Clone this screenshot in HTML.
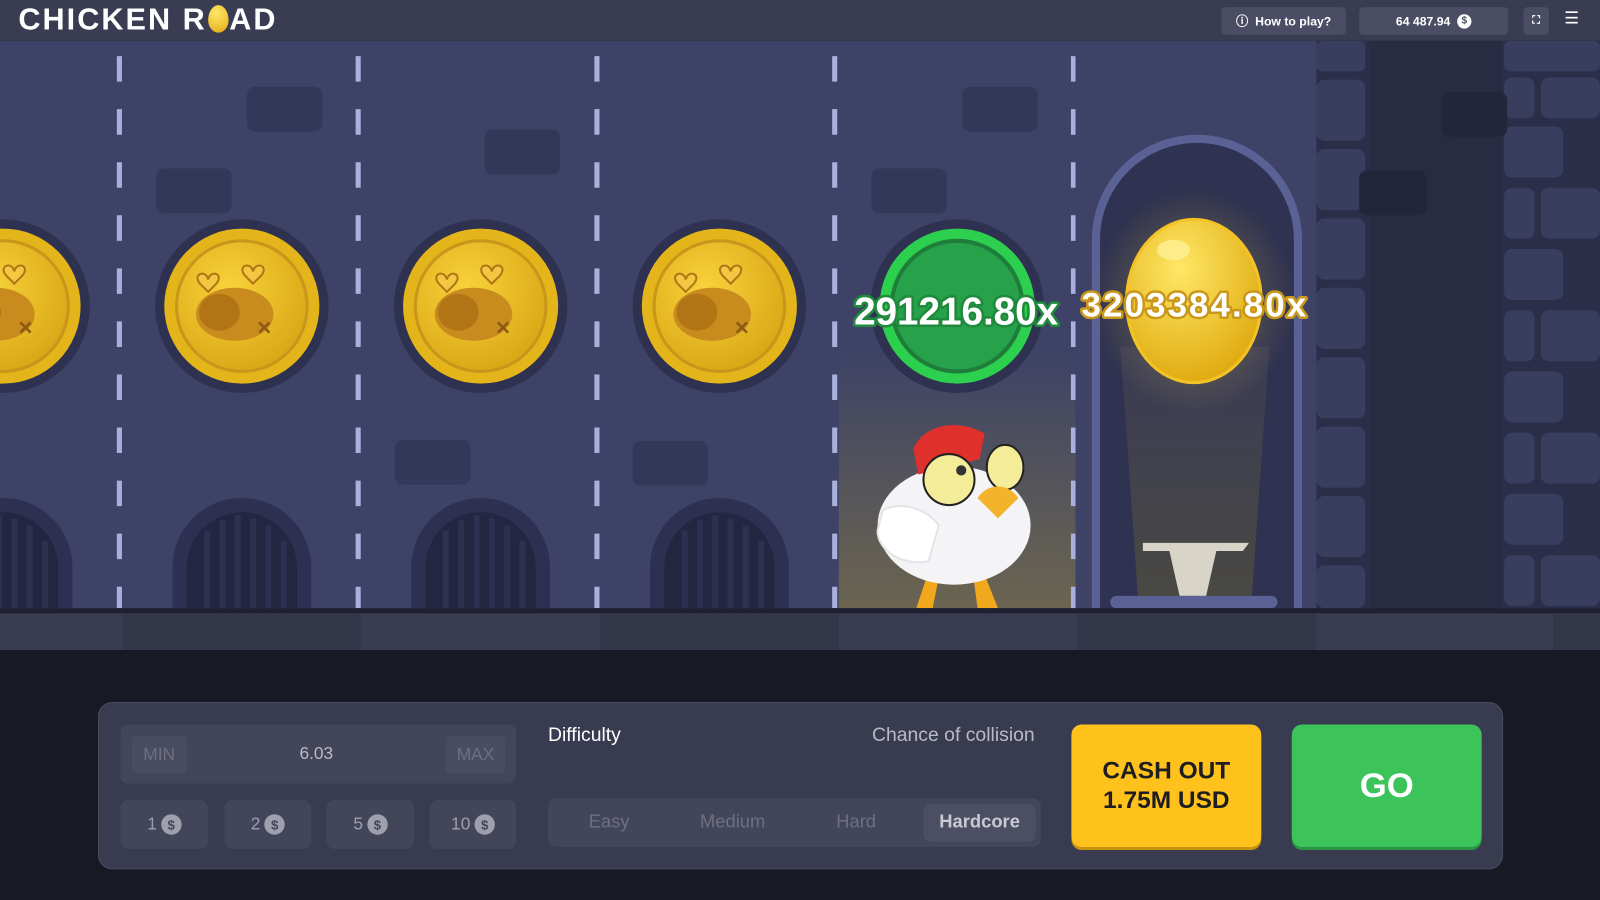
<!DOCTYPE html>
<html><head><meta charset="utf-8"><style>
html,body{margin:0;padding:0;width:1600px;height:900px;overflow:hidden;background:#171925;font-family:"Liberation Sans",sans-serif}
#s{position:absolute;left:0;top:0;width:1568px;height:882px;transform:scale(1.020408);transform-origin:0 0;background:#171925}
.a{position:absolute}
.hdr{left:0;top:0;width:1568px;height:40px;background:#3a3c52}
.btn{background:#4b4d64;border-radius:4px;color:#fff;font-size:12px;font-weight:bold;display:flex;align-items:center;justify-content:center}
.panel{left:96px;top:688px;width:1375px;height:162px;background:#393b50;border:1px solid #4a4d5c;border-radius:14px}
.box{background:#43455a;border-radius:8px}
.chip{top:784px;height:48px;background:#43455a;border-radius:8px;color:#9ea0ad;font-size:17px;display:flex;align-items:center;justify-content:center;gap:4px}
.d{width:20px;height:20px;border-radius:50%;background:#9ea0ad;color:#43455a;font-size:13px;font-weight:bold;display:flex;align-items:center;justify-content:center}
</style></head><body><div id="s">
<svg class="a" style="left:0;top:40px" width="1568" height="600" viewBox="0 40 1568 600">
<defs>
<radialGradient id="g" cx="0.4" cy="0.35" r="0.7"><stop offset="0" stop-color="#f7d23a"/><stop offset="1" stop-color="#d9a615"/></radialGradient>
<linearGradient id="ch" x1="0" y1="0" x2="0" y2="1"><stop offset="0" stop-color="#3d4266"/><stop offset="1" stop-color="#6b6550"/></linearGradient>
<linearGradient id="lt" x1="0" y1="0" x2="0" y2="1"><stop offset="0" stop-color="#3a3b55"/><stop offset="1" stop-color="#4a4942"/></linearGradient>
<radialGradient id="eg" cx="0.4" cy="0.3" r="0.7"><stop offset="0" stop-color="#ffe766"/><stop offset="1" stop-color="#e0ac12"/></radialGradient>
<radialGradient id="glow"><stop offset="0" stop-color="#f6d34a" stop-opacity="0.35"/><stop offset="1" stop-color="#f6d34a" stop-opacity="0"/></radialGradient>
</defs>
<rect x="0" y="40" width="1568" height="560" fill="#3d4266"/>
<rect x="822" y="340" width="232" height="256" fill="url(#ch)"/>
<g fill="#343858">
<rect x="242" y="85" width="74" height="44" rx="8"/><rect x="153" y="165" width="74" height="44" rx="8"/>
<rect x="475" y="127" width="74" height="44" rx="8"/><rect x="387" y="431" width="74" height="44" rx="8"/>
<rect x="620" y="432" width="74" height="44" rx="8"/><rect x="943" y="85" width="74" height="44" rx="8"/>
<rect x="854" y="165" width="74" height="44" rx="8"/><rect x="1172" y="55" width="74" height="44" rx="8"/>
</g>
<g stroke="#a9b0dc" stroke-width="5" stroke-dasharray="25 27">
<line x1="117" y1="55" x2="117" y2="596"/><line x1="351" y1="55" x2="351" y2="596"/><line x1="585" y1="55" x2="585" y2="596"/><line x1="818" y1="55" x2="818" y2="596"/><line x1="1052" y1="55" x2="1052" y2="596"/>
</g>
<g id="coin">
<circle cx="237" cy="300" r="85" fill="#2e3150"/><circle cx="237" cy="300" r="76" fill="#e3b51b"/><circle cx="237" cy="300" r="64" fill="url(#g)" stroke="#c8961a" stroke-width="3"/>
<ellipse cx="230" cy="308" rx="38" ry="26" fill="#c98b1e"/><ellipse cx="215" cy="306" rx="20" ry="18" fill="#b27516"/>
<path d="M196 278c-8-10 6-14 8-4c2-10 16-6 8 4l-8 8z M240 270c-8-10 6-14 8-4c2-10 16-6 8 4l-8 8z" fill="#f2c842" stroke="#b27516" stroke-width="2"/>
<path d="M254 316l10 10m0-10l-10 10" stroke="#8a5a12" stroke-width="2.5"/>
</g>
<use href="#coin" x="234"/><use href="#coin" x="468"/><use href="#coin" x="-234"/>
<g id="arch"><path d="M169 596v-40a68 68 0 0 1 136 0v40z" fill="#2d3050"/><path d="M183 596v-40a54 54 0 0 1 108 0v40z" fill="#232640"/>
<g stroke="#2d3050" stroke-width="6"><line x1="203" y1="596" x2="203" y2="520"/><line x1="218" y1="596" x2="218" y2="510"/><line x1="233" y1="596" x2="233" y2="505"/><line x1="248" y1="596" x2="248" y2="508"/><line x1="263" y1="596" x2="263" y2="515"/><line x1="278" y1="596" x2="278" y2="530"/></g></g>
<use href="#arch" x="234"/><use href="#arch" x="468"/><use href="#arch" x="-234"/>
<circle cx="938" cy="300" r="85" fill="#2e3150"/><circle cx="938" cy="300" r="76" fill="#2dd04e"/><circle cx="938" cy="300" r="64" fill="#27a14a" stroke="#1e7d3a" stroke-width="4"/>
<rect x="1290" y="40" width="278" height="556" fill="#2b2e48"/>
<g fill="#393d5e"><rect x="1290" y="40" width="48" height="30" rx="6"/><rect x="1290" y="78" width="48" height="60" rx="8"/><rect x="1290" y="146" width="48" height="60" rx="8"/><rect x="1290" y="214" width="48" height="60" rx="8"/><rect x="1290" y="282" width="48" height="60" rx="8"/><rect x="1290" y="350" width="48" height="60" rx="8"/><rect x="1290" y="418" width="48" height="60" rx="8"/><rect x="1290" y="486" width="48" height="60" rx="8"/><rect x="1290" y="554" width="48" height="42" rx="8"/>
<rect x="1474" y="40" width="94" height="30" rx="6"/><rect x="1474" y="76" width="30" height="40" rx="8"/><rect x="1510" y="76" width="58" height="40" rx="8"/><rect x="1474" y="124" width="58" height="50" rx="8"/><rect x="1474" y="184" width="30" height="50" rx="8"/><rect x="1510" y="184" width="58" height="50" rx="8"/><rect x="1474" y="244" width="58" height="50" rx="8"/><rect x="1474" y="304" width="30" height="50" rx="8"/><rect x="1510" y="304" width="58" height="50" rx="8"/><rect x="1474" y="364" width="58" height="50" rx="8"/><rect x="1474" y="424" width="30" height="50" rx="8"/><rect x="1510" y="424" width="58" height="50" rx="8"/><rect x="1474" y="484" width="58" height="50" rx="8"/><rect x="1474" y="544" width="30" height="50" rx="8"/><rect x="1510" y="544" width="58" height="50" rx="8"/></g>
<rect x="1342" y="40" width="130" height="556" fill="#282b42"/>
<rect x="1413" y="90" width="64" height="44" rx="8" fill="#23263b"/><rect x="1332" y="167" width="66" height="44" rx="8" fill="#23263b"/>
<rect x="1054" y="40" width="236" height="556" fill="#3d4266"/>
<path d="M1070 596V235a103 103 0 0 1 206 0v361z" fill="#5a6194"/>
<path d="M1078 596V235a95 95 0 0 1 190 0v361z" fill="#2f3250"/>
<path d="M1098 340h146l-18 256h-110z" fill="url(#lt)"/>
<ellipse cx="1170" cy="295" rx="100" ry="110" fill="url(#glow)"/>
<ellipse cx="1170" cy="295" rx="66" ry="80" fill="url(#eg)" stroke="#f3c326" stroke-width="3"/>
<ellipse cx="1150" cy="245" rx="16" ry="10" fill="#fff3a0" opacity="0.7"/>
<path d="M1120 532h104l-6 8h-26l-10 44h-26l-10-44h-26z" fill="#d8d4c8"/>
<rect x="1088" y="584" width="164" height="12" rx="6" fill="#5a6194"/>
<path d="M898 596l10-30h12l-6 30z M958 596l-4-30h12l12 30z" fill="#f2a81c"/>
<ellipse cx="935" cy="515" rx="75" ry="58" fill="#f4f4f6"/>
<path d="M895 440c10-25 45-30 70-15l-5 25-60 15z" fill="#e0302c"/>
<ellipse cx="930" cy="470" rx="25" ry="25" fill="#f5ec9a" stroke="#222" stroke-width="2"/><circle cx="942" cy="461" r="5" fill="#333"/>
<ellipse cx="985" cy="458" rx="18" ry="22" fill="#f5ec9a" stroke="#222" stroke-width="2"/>
<path d="M958 488c10-15 30-15 40 0l-20 20z" fill="#f3b32a"/>
<path d="M865 500c20-10 45 0 55 15l-10 35c-25 5-50-10-50-30z" fill="#fff" stroke="#e4e4e8" stroke-width="2"/>
<rect x="0" y="596" width="1568" height="5" fill="#1f2132"/>
<rect x="0" y="601" width="1568" height="36" fill="#3a3c51"/>
<g fill="#34364a"><rect x="120" y="601" width="234" height="36"/><rect x="588" y="601" width="234" height="36"/><rect x="1056" y="601" width="234" height="36"/><rect x="1522" y="601" width="46" height="36"/></g>
<g font-family="Liberation Sans,sans-serif" font-weight="bold" font-size="38" paint-order="stroke" stroke-linejoin="round">
<text x="937" y="318" text-anchor="middle" fill="#fff" stroke="#1f8a3c" stroke-width="5" textLength="200">291216.80x</text>
<text x="1170" y="310" text-anchor="middle" fill="#fff" stroke="#c9971a" stroke-width="5" font-size="34" textLength="220">3203384.80x</text>
</g>
</svg>
<div class="a hdr"></div>
<div class="a" style="left:18px;top:3px;color:#fff;font-size:30px;font-weight:900;letter-spacing:2px;font-family:'Liberation Sans',sans-serif;white-space:nowrap">CHICKEN R<span style="display:inline-block;width:20px;height:27px;border-radius:50%/55% 55% 45% 45%;background:radial-gradient(circle at 40% 30%,#ffe766,#e0a812);vertical-align:-3px;margin:0 1px"></span>AD</div>
<div class="a btn" style="left:1197px;top:7px;width:122px;height:27px">ⓘ&nbsp; How to play?</div>
<div class="a btn" style="left:1332px;top:7px;width:146px;height:27px">64 487.94 &nbsp;<span style="display:inline-flex;width:14px;height:14px;border-radius:50%;background:#fff;color:#4b4d64;font-size:10px;align-items:center;justify-content:center">$</span></div>
<div class="a btn" style="left:1493px;top:7px;width:25px;height:27px;font-size:11px">⛶</div>
<div class="a" style="left:1533px;top:11px;color:#fff;font-size:16px;line-height:16px">☰</div>
<div class="a panel"></div>
<div class="a box" style="left:118px;top:710px;width:388px;height:58px"></div>
<div class="a" style="left:129px;top:721px;width:54px;height:37px;background:#4a4c61;border-radius:5px;color:#6e7082;font-size:17px;display:flex;align-items:center;justify-content:center">MIN</div>
<div class="a" style="left:437px;top:721px;width:58px;height:37px;background:#4a4c61;border-radius:5px;color:#6e7082;font-size:17px;display:flex;align-items:center;justify-content:center">MAX</div>
<div class="a" style="left:260px;top:729px;width:100px;text-align:center;color:#b8bac4;font-size:17px">6.03</div>
<div class="a chip" style="left:118px;width:86px">1<span class="d">$</span></div>
<div class="a chip" style="left:220px;width:85px">2<span class="d">$</span></div>
<div class="a chip" style="left:320px;width:86px">5<span class="d">$</span></div>
<div class="a chip" style="left:421px;width:85px">10<span class="d">$</span></div>
<div class="a" style="left:537px;top:710px;color:#fff;font-size:19px">Difficulty</div>
<div class="a" style="left:800px;top:710px;width:214px;text-align:right;color:#b8bac4;font-size:19px">Chance of collision</div>
<div class="a box" style="left:537px;top:782px;width:483px;height:48px"></div>
<div class="a" style="left:905px;top:788px;width:110px;height:37px;background:#4c4e63;border-radius:7px"></div>
<div class="a" style="left:537px;top:795px;width:120px;text-align:center;color:#6e7082;font-size:18px">Easy</div>
<div class="a" style="left:658px;top:795px;width:120px;text-align:center;color:#6e7082;font-size:18px">Medium</div>
<div class="a" style="left:779px;top:795px;width:120px;text-align:center;color:#6e7082;font-size:18px">Hard</div>
<div class="a" style="left:900px;top:795px;width:120px;text-align:center;color:#c9cbd4;font-size:18px;font-weight:bold">Hardcore</div>
<div class="a" style="left:1050px;top:710px;width:186px;height:120px;background:#ffc11c;border-radius:10px;box-shadow:0 3px 0 #c8930f;color:#1d1d22;font-weight:bold;font-size:24px;line-height:29px;display:flex;align-items:center;justify-content:center;text-align:center">CASH OUT<br>1.75M USD</div>
<div class="a" style="left:1266px;top:710px;width:186px;height:120px;background:#3cc45a;border-radius:10px;box-shadow:0 3px 0 #2a9444;color:#fff;font-weight:bold;font-size:34px;display:flex;align-items:center;justify-content:center">GO</div>
</div></body></html>
